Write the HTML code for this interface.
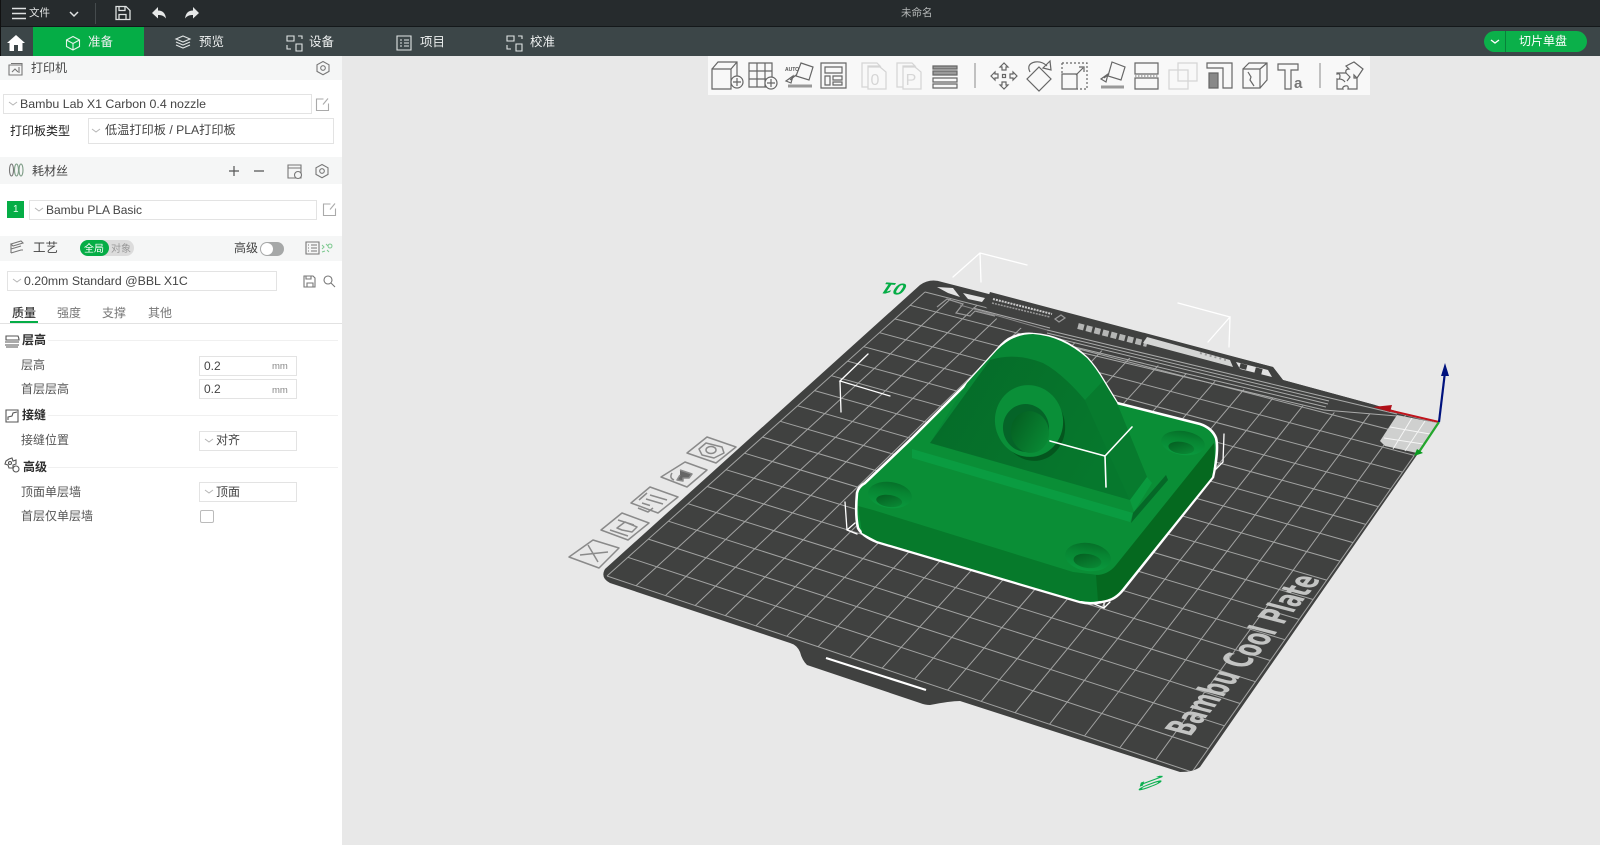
<!DOCTYPE html>
<html lang="zh"><head><meta charset="utf-8"><title>未命名</title>
<style>
html,body{margin:0;padding:0;width:1600px;height:845px;overflow:hidden;background:#e8e8e8}
body{position:relative;font-family:"Liberation Sans","Noto Sans CJK SC",sans-serif;color:#444}
.b{position:absolute}
.t{position:absolute;white-space:nowrap;line-height:1;font-size:12px}
.box{position:absolute;background:#fff;border:1px solid #e3e3e3;box-sizing:border-box}
svg.o{position:absolute;left:0;top:0}
.n{color:#eef0f0;font-size:12.5px}
.h{color:#444;font-size:12px}
.s{color:#2e2e2e;font-weight:bold;font-size:12px}
.l{color:#555;font-size:12px}
.tab{color:#777;font-size:12px}
</style></head><body>
<div class="b" style="left:0;top:0;width:1600px;height:27px;background:#262b2d;border-bottom:1px solid #14181a;box-sizing:border-box"></div>
<div class="b" style="left:0;top:27px;width:1600px;height:29px;background:#3c4648"></div>
<div class="b" style="left:0;top:0;width:1px;height:56px;background:#111"></div>
<div class="b" style="left:33px;top:27px;width:111px;height:29px;background:#05ad46"></div>
<div class="b" style="left:1484px;top:31px;width:103px;height:21px;border-radius:11px;background:#0bb04a"></div>
<div class="b" style="left:1505px;top:31px;width:1px;height:21px;background:#08823a"></div>

<div class="b" style="left:0;top:56px;width:342px;height:789px;background:#fff"></div>
<div class="b" style="left:0;top:56px;width:342px;height:24px;background:#f5f6f6"></div>
<div class="b" style="left:0;top:157px;width:342px;height:27px;background:#f5f6f6"></div>
<div class="b" style="left:0;top:236px;width:342px;height:25px;background:#f5f6f6"></div>

<div class="box" style="left:3px;top:94px;width:309px;height:20px"></div>
<div class="box" style="left:88px;top:118px;width:246px;height:26px"></div>
<div class="b" style="left:7px;top:201px;width:17px;height:17px;background:#05ad46"></div>
<div class="box" style="left:29px;top:200px;width:288px;height:20px"></div>
<div class="b" style="left:80px;top:240px;width:54px;height:16px;border-radius:8px;background:#dcdcdc"></div>
<div class="b" style="left:80px;top:240px;width:29px;height:16px;border-radius:8px;background:#05ad46"></div>
<div class="b" style="left:260px;top:242px;width:24px;height:14px;border-radius:7px;background:#a6a8a8"></div>
<div class="b" style="left:261px;top:243px;width:12px;height:12px;border-radius:6px;background:#fff"></div>
<div class="box" style="left:7px;top:271px;width:270px;height:20px"></div>
<div class="b" style="left:10px;top:321px;width:28px;height:2px;background:#05ad46"></div>
<div class="b" style="left:0;top:323px;width:342px;height:1px;background:#e2e2e2"></div>
<div class="b" style="left:48px;top:340px;width:290px;height:1px;background:#f0f0f0"></div>
<div class="b" style="left:48px;top:415px;width:290px;height:1px;background:#f0f0f0"></div>
<div class="b" style="left:48px;top:467px;width:290px;height:1px;background:#f0f0f0"></div>
<div class="box" style="left:199px;top:356px;width:98px;height:20px"></div>
<div class="box" style="left:199px;top:379px;width:98px;height:20px"></div>
<div class="box" style="left:199px;top:431px;width:98px;height:20px"></div>
<div class="box" style="left:199px;top:482px;width:98px;height:20px"></div>
<div class="b" style="left:200px;top:510px;width:14px;height:13px;border:1px solid #bbb;border-radius:2px;box-sizing:border-box;background:#fff"></div>

<div class="b" style="left:708px;top:56px;width:662px;height:39px;background:#f8f8f8"></div>

<svg class="o" width="1600" height="845" viewBox="0 0 1600 845" xmlns="http://www.w3.org/2000/svg" fill="none">
<defs>
<clipPath id="plate"><path d="M920,285 Q930,278 942,282 L1273,367 L1283,380 L1375,405 L1437,423 L1417,455 L1200,767 Q1194,772 1180,772 L960,701 Q950,701 930,705 Q925,705 920,703 L807,665 Q802,660 800,652 Q797,645 790,643 L610,583 Q600,578 605,569 Z"/></clipPath>
<linearGradient id="hg" x1="0" y1="0" x2="0" y2="1"><stop offset="0" stop-color="#067029"/><stop offset=".35" stop-color="#078532"/><stop offset="1" stop-color="#0a9a3e"/></linearGradient>
<linearGradient id="hi" x1="0" y1="0" x2="1" y2="1"><stop offset="0" stop-color="#045a1f"/><stop offset="1" stop-color="#0a8f37"/></linearGradient>
<linearGradient id="fc" x1="0" y1="0" x2="1" y2=".4"><stop offset="0" stop-color="#056a28"/><stop offset="1" stop-color="#06782d"/></linearGradient>
</defs>

<!-- plate -->
<path d="M920,285 Q930,278 942,282 L1273,367 L1283,380 L1375,405 L1437,423 L1417,455 L1200,767 Q1194,772 1180,772 L960,701 Q950,701 930,705 Q925,705 920,703 L807,665 Q802,660 800,652 Q797,645 790,643 L610,583 Q600,578 605,569 Z" fill="#404140"/>
<g clip-path="url(#plate)"><g id="grid" stroke="#a2a3a2" stroke-width="1"></g></g>
<!-- top band -->
<polygon points="990,292 1273,367 1283,380 1375,405 1390,415 1325,412 1160,366 1107,352 1000,322 985,306" fill="#404140"/>
<g stroke="#a9aaa9" stroke-width="1">
<line x1="1047" y1="330" x2="1330" y2="398"/><line x1="1047" y1="333" x2="1329" y2="401"/><line x1="1047" y1="336" x2="1328" y2="404"/><line x1="1062" y1="344" x2="1326" y2="407"/><line x1="1075" y1="351" x2="1324" y2="410"/>
<line x1="1330" y1="398" x2="1397" y2="414"/><line x1="1324" y1="410" x2="1397" y2="416"/>
</g>
<line x1="1078" y1="326" x2="1147" y2="344" stroke="#b5b6b5" stroke-width="6" stroke-dasharray="6 2.5"/>
<polygon points="1147,337 1230,360 1233,367 1143,343" fill="#d4d5d4"/>
<polygon points="1236,362 1268,370 1272,377 1240,369" fill="#e2e2e2"/>
<rect x="1240" y="364" width="7" height="5" fill="#404140" transform="rotate(15 1243 366)"/>
<rect x="1255" y="368" width="7" height="6" fill="#404140" transform="rotate(15 1258 371)"/>
<line x1="1200" y1="353" x2="1226" y2="360" stroke="#999" stroke-width="2" stroke-dasharray="2 3"/>
<polygon points="937,287 953,288 960,297 948,293" fill="#e4e4e4"/>
<polygon points="963,293 985,298 982,302 968,299" fill="#e4e4e4"/>
<line x1="993" y1="299" x2="1052" y2="314" stroke="#ccc" stroke-width="2" stroke-dasharray="2 1"/>
<line x1="992" y1="303" x2="1050" y2="317" stroke="#999" stroke-width="1.5" stroke-dasharray="2 1"/>
<path d="M1055,319l6,-4l4,3l-6,4zM937,307l10,-8l16,5l-7,9l14,3l5,-5l20,5" stroke="#999" stroke-width="1.2"/>
<line x1="973" y1="308" x2="1050" y2="328" stroke="#aaa"/>
<line x1="960" y1="305" x2="1047" y2="330" stroke="#888"/>
<!-- gray corner -->
<polygon points="1397,415 1437,423 1417,453 1385,446 1380,441" fill="#cfd0cf"/>
<path d="M1412,418L1393,449M1425,421L1405,451M1390,427L1430,434M1384,438L1423,444" stroke="#fff" stroke-opacity=".8"/>
<!-- plate text -->
<text transform="matrix(.64,-.77,1.23,.32,1190,737)" font-family="'DejaVu Sans','Liberation Sans',sans-serif" font-weight="bold" font-size="30" fill="#c3c4c3" textLength="205" lengthAdjust="spacingAndGlyphs">Bambu Cool Plate</text>
<line x1="826" y1="658" x2="926" y2="690" stroke="#fff" stroke-width="2.2"/>
<text transform="matrix(-1.3,-.1,.4,-1,908,284)" font-family="'Liberation Sans',sans-serif" font-size="16" font-weight="bold" font-style="italic" fill="#05ad46">01</text>
<text transform="matrix(-.2,.75,-2.7,1,1141,782)" font-family="'Liberation Sans',sans-serif" font-size="12" font-weight="bold" fill="#0cb050">10</text>

<!-- left plate labels -->
<g stroke="#8a8a8a" stroke-width="1.5" stroke-linejoin="round">
<polygon points="707,437 736,447 716,463 687,453"/><polygon points="685,462 707,470 687,487 661,477"/><polygon points="650,487 678,497 658,513 631,503"/><polygon points="622,513 649,523 628,540 601,530"/><polygon points="593,540 619,548 599,568 569,557"/>
<polygon points="706,443 722,447 724,453 714,458 702,455 699,449"/><ellipse cx="711" cy="450" rx="5" ry="3.5"/>
<path d="M680,470l12,4l-3,4h-6v3l-6,-1l3,-5" fill="#666"/><path d="M672,473q-3,5 2,7"/>
<path d="M650,495l17,5M646,499l17,5M642,503l8,2.5M639,500l8,-7M653,508l-5,4l-10,-4"/>
<path d="M618,520l16,5M617,528l8,-6l12,5l-5,5l-10,-2zM610,530l18,6"/>
<path d="M588,545L598,562M580,555L608,552"/>
</g>

<!-- bounding box lines -->
<g stroke="#fff" stroke-width="1.3" stroke-linecap="round">
<path d="M868,354L840,381L890,396M840,381L841,412"/>
<path d="M980,253L953,277M980,253L1027,265M980,253L981,282"/>
<path d="M1178,303L1230,317L1208,342M1230,317L1229,347"/>
<path d="M1224,434L1223,462L1215,470"/>
<path d="M845,502L847,530L857,534M847,530L855,523"/>
<path d="M1104,580L1104,608L1092,603M1104,608L1110,602"/>
</g>

<!-- model -->
<path d="M857,493 Q858,487 865,483 L910,440 L967,383 L997,350 Q1005,340 1013,337 Q1023,333 1033,334 Q1048,335 1060,340 Q1076,347 1087,358 Q1096,368 1103,380 L1117,403 L1200,424 Q1212,428 1216,438 Q1219,450 1213,477 L1123,590 Q1115,600 1105,601 Q1092,605 1080,602 L877,542 Q862,536 858,528 Q855,515 857,493 Z" fill="#0a8e36" stroke="#fff" stroke-width="2.6"/>
<polygon points="858,506 873,510 1073,572 1098,575 1100,601 1080,601 877,541 862,533" fill="#067a2b"/>
<path d="M1214,443 L1116,565 Q1108,575 1096,575 L1098,601 Q1112,601 1122,589 L1212,477 Q1216,460 1214,443 Z" fill="#05691f"/>
<!-- upright -->
<path d="M930,443 L967,383 L997,350 Q1013,334 1033,334 Q1062,336 1087,358 Q1096,368 1103,380 L1117,403 L1147,477 L1130,500 Z" fill="#088835"/>
<polygon points="1085,400 1103,381 1117,403 1147,477 1130,500" fill="#077b2e"/>
<path d="M930,443 L990,360 Q1015,352 1043,363 Q1062,373 1085,400 L1130,500 Z" fill="url(#fc)"/>
<polygon points="1130,500 1147,477 1152,483 1134,512" fill="#0a9a3e"/>
<polygon points="912,449 912,458 1130,522 1133,513" fill="#0a9c41"/>
<polygon points="1133,513 1166,475 1168,480 1131,523" fill="#056827"/>
<!-- boss -->
<ellipse cx="1033" cy="426" rx="32" ry="35" fill="#04561e" transform="rotate(-12 1033 426)"/>
<ellipse cx="1029" cy="421" rx="34" ry="36" fill="#0a8f38" transform="rotate(-12 1029 421)"/>
<ellipse cx="1026" cy="428" rx="23" ry="24" fill="#056428" transform="rotate(-12 1026 428)"/>
<ellipse cx="1030" cy="432" rx="19" ry="21" fill="url(#hi)" transform="rotate(-12 1030 432)"/>
<!-- holes -->
<g transform="rotate(8 890 495)"><ellipse cx="890" cy="495" rx="22" ry="13" fill="url(#hg)"/><ellipse cx="890" cy="501" rx="13" ry="6" fill="url(#hi)"/></g>
<g transform="rotate(8 1088 557)"><ellipse cx="1088" cy="557" rx="23" ry="14" fill="url(#hg)"/><ellipse cx="1088" cy="561" rx="14" ry="7" fill="url(#hi)"/></g>
<g transform="rotate(8 1183 443)"><ellipse cx="1183" cy="443" rx="22" ry="12" fill="url(#hg)"/><ellipse cx="1182" cy="448" rx="13" ry="6" fill="url(#hi)"/></g>
<path d="M1050,441L1105,456L1132,427M1105,456L1106,487" stroke="#fff" stroke-width="1.6" stroke-linecap="round"/>

<!-- axes -->
<line x1="1439" y1="422" x2="1388" y2="410" stroke="#c0141c" stroke-width="2"/><polygon points="1373,407 1392,405 1390,412" fill="#b01018"/>
<line x1="1439" y1="422" x2="1419" y2="452" stroke="#23a72c" stroke-width="2.2"/><polygon points="1414,456 1417,449 1423,453" fill="#0a9a20"/>
<line x1="1439" y1="422" x2="1445" y2="372" stroke="#00127e" stroke-width="2.2"/><polygon points="1445,363 1441,376 1449,376" fill="#00127e"/>

<!-- toolbar icons -->
<line x1="975" y1="63" x2="975" y2="88" stroke="#8a8a8a"/><line x1="1320" y1="63" x2="1320" y2="88" stroke="#8a8a8a"/>
<g stroke="#666" stroke-width="1.2">
<path d="M712,69h19v20h-19zM712,69l6,-7h19v14M731,69l6,-7"/><circle cx="737" cy="82" r="6" fill="#f8f8f8"/><path d="M733,82h8M737,78v8"/>
<path d="M749,63h23v24h-23zM749,71h23M749,79h23M757,63v24M765,63v24"/><circle cx="771" cy="83" r="6" fill="#f8f8f8"/><path d="M767,83h8M771,79v8"/>
<path d="M801,63l12,4l-4,13l-13,-4z" /><path d="M788,86h24" stroke-width="3" stroke="#999"/><path d="M793,76l-7,5l5,2zM790,80l6,-5" />
<path d="M821,63h25v25h-25zM825,67h17v6h-17zM825,76h5v9h-5zM833,76h9v4h-9zM833,82h9v3h-9z"/>
<path d="M933,66h24v3h-24zM933,71h24v4h-24z" fill="#9a9a9a"/><path d="M933,78h24v4h-24zM933,84h24v4h-24z"/>
<path d="M1004,63l-4,4h2v3h4v-3h2zM1004,89l-4,-4h2v-3h4v3h2zM991,76l4,-4v2h3v4h-3v2zM1017,76l-4,-4v2h-3v4h3v2z"/><rect x="1002.500" y="74.500" width="3" height="3"/>
<path d="M1039,67l12,12l-12,12l-12,-12zM1030,72q-4,-8 5,-10q7,-1 12,4M1050,61l1,9l-8,-2z"/>
<path d="M1062,74h15v15h-15z" /><path d="M1062,63h25v26h-10M1062,63v10" stroke-dasharray="2 2"/><path d="M1076,75l7,-7M1079,67h5v5"/>
<path d="M1112,62l13,5l-4,13l-13,-4z"/><path d="M1101,87h23" stroke-width="3" stroke="#999"/><path d="M1108,74l-7,5l5,3zM1104,78l5,-4"/>
<path d="M1135,63h23v11h-23zM1135,78h23v11h-23z"/><path d="M1135,76h23" stroke-dasharray="1.500 1.500" stroke="#888"/>
<path d="M1207,63h25v25h-9v-20h-16z"/><path d="M1209,73h9v15h-9z" fill="#888"/>
<path d="M1243,69h17v19h-17zM1243,69l6,-6h18v17l-7,8M1260,69l7,-6M1248,72l3,5l-1,3l4,6" />
<path d="M1278,64h20v6h-7v19h-6v-19h-7z"/>
<path d="M1337,73h9q-1,-4 3,-4l-3,-3l8,-4l9,7l-6,9l-3,-3v3h3v11h-9q1,-4 -3,-3q-3,1 -2,3h-6v-10q3,1 3,-3q0,-3 -3,-2z"/><path d="M1346,73l4,4l-3,4M1339,79q4,0 6,3"/>
</g>
<text x="1294" y="88" font-family="'Liberation Sans',sans-serif" font-size="15" font-weight="bold" fill="#777">a</text>
<text x="785" y="71" font-family="'Liberation Sans',sans-serif" font-size="5" font-weight="bold" fill="#555">AUTO</text>
<g stroke="#d4d4d4" stroke-width="1.2">
<path d="M862,63h15l3,3h-12v21h-6zM868,67h12l6,5v17h-18z"/>
<path d="M897,63h15l3,3h-12v21h-6zM903,67h12l6,5v17h-18z"/>
<path d="M1178,63h19v18h-19zM1169,70h19v19h-19z"/>
</g>
<text x="875" y="85" text-anchor="middle" font-family="'Liberation Sans',sans-serif" font-size="16" fill="#d6d6d6">0</text>
<text x="911" y="85" text-anchor="middle" font-family="'Liberation Sans',sans-serif" font-size="16" fill="#d6d6d6">P</text>

<!-- title icons -->
<g stroke="#dfe2e2" stroke-width="1.5">
<path d="M12,8.500h14M12,13.500h14M12,18.500h14"/>
<path d="M70,12l4,4l4,-4"/>
<path d="M116,6.500h10l4,4v9h-14zM119,6.500v4h6v-4M119,19.500v-5h7v5" stroke-width="1.3"/>
</g>
<line x1="95.500" y1="3" x2="95.500" y2="24" stroke="#454b4d"/>
<path d="M152,13l6,-6v3.500q7,0 8,8q-3,-4 -8,-3.500v3.500z" fill="#e6e8e8"/>
<path d="M199,13l-6,-6v3.500q-7,0 -8,8q3,-4 8,-3.500v3.500z" fill="#e6e8e8"/>

<!-- nav icons -->
<path d="M16,35l-9,8h2.500v8h4.500v-6h4v6h4.500v-8h2.500z" fill="#fff"/>
<g stroke="#e6f5ea" stroke-width="1.1">
<path d="M73,36.500l6.500,3.500v6.500l-6.500,3.500l-6.500,-3.500v-6.500zM66.500,40l6.500,3.500l6.500,-3.500M73,43.500v6.500"/>
</g>
<g stroke="#e2e6e6" stroke-width="1.1">
<path d="M183,36l7,3l-7,3l-7,-3zM176,42l7,3l7,-3M176,45l7,3l7,-3"/>
<path d="M287,36h7v5h-7zM298,36h4v3M287,45v4h4M296,44h6v7h-6z"/>
<path d="M397,36h14v14h-14zM400,40h2M404,40h5M400,43h2M404,43h5M400,46h2M404,46h5"/>
<path d="M507,36h7v5h-7zM518,36h4v3M507,45v4h4M516,44h6v7h-6z"/>
</g>
<path d="M1491,40l4,3l4,-3" stroke="#fff" stroke-width="1.400"/>

<!-- panel icons -->
<g stroke="#777" stroke-width="1.1">
<path d="M9,65h13v10h-13zM11,63.500h11v1.500M19,67v6M12,72l3,-3l3,3"/>
<path d="M323,61.500l6,3.300v6.600l-6,3.300l-6,-3.300v-6.600z"/><circle cx="323" cy="68" r="2.300"/>
<path d="M322,172.500" />
<path d="M323.500,99h-7v11.500h12v-7M323,104.500l5,-6" stroke="#aaa"/>
<ellipse cx="11.500" cy="170" rx="2" ry="6"/><ellipse cx="16.500" cy="170" rx="2" ry="6" stroke="#7d9c86"/><ellipse cx="21" cy="170" rx="2" ry="6" stroke="#7d9c86"/>
<path d="M229,171h10M234,166v10M254,171h10" stroke="#555" stroke-width="1.2"/>
<path d="M288,165h13v13h-13zM288,168h13" /><circle cx="298" cy="175" r="3.500" fill="#f5f6f6"/>
<path d="M322,164.500l6,3.300v6.600l-6,3.300l-6,-3.300v-6.600z"/><circle cx="322" cy="171" r="2.300"/>
<path d="M330.500,204h-7v11.500h12v-7M330,209.500l5,-6" stroke="#aaa"/>
<path d="M11,244l10,-3l2,2l-10,3zM11,249l10,-3M11,253l10,-3h2M11,244v9" />
<path d="M306,242h13v12h-13zM308,245h1M311,245h6M308,248h1M311,248h6M308,251h1M311,251h6"/>
<path d="M304,276h9l2,2v9h-11zM306,276v3h5v-3M307,287v-4h6v4"/>
<circle cx="328" cy="280" r="4"/><path d="M331,283l4,4"/>
<path d="M6,336h12q1,2 1,4h-13q0,-2 0,-4zM5,342h14M5,345h14M6,347h12" stroke="#555"/>
<path d="M6,410h12v12h-12zM8,420v-3l4,-1l1,-3l4,-1" stroke="#555"/>
<path d="M9,459l3,-1l1,3l3,-1v4l-3,1v3l-4,0l-1,-3l-3,-1l1,-3z" stroke="#555"/><circle cx="10" cy="463" r="1.500" stroke="#555"/><circle cx="16" cy="469" r="3" stroke="#555"/>
</g>
<path d="M322,245l2,2l-2,2M326,244l2,2M322,252l3,-1M329,252l-2,-2M330,244a2,2 0 1 0 .01,0" stroke="#7cc98f"/>
<g stroke="#b5b5b5" stroke-width="1">
<path d="M9,102l4,3l4,-3M92,129l4,3l4,-3M35,208l4,3l4,-3M13,279l4,3l4,-3M205,439l4,3l4,-3M205,490l4,3l4,-3"/>
</g>
</svg>

<div class="t" style="left:29px;top:8px;font-size:10.500px;color:#e2e4e4">文件</div>
<div class="t" style="left:901px;top:8px;font-size:10.500px;color:#b5b8b8">未命名</div>
<div class="t n" style="left:88px;top:36px;">准备</div>
<div class="t n" style="left:199px;top:36px;">预览</div>
<div class="t n" style="left:309px;top:36px;">设备</div>
<div class="t n" style="left:420px;top:36px;">项目</div>
<div class="t n" style="left:530px;top:36px;">校准</div>
<div class="t" style="left:1519px;top:35px;color:#fff;font-size:12px">切片单盘</div>

<div class="t h" style="left:31px;top:62px">打印机</div>
<div class="t" style="left:20px;top:98px;color:#444;font-size:12.400px">Bambu Lab X1 Carbon 0.4 nozzle</div>
<div class="t s" style="left:10px;top:125px;font-weight:normal;color:#222">打印板类型</div>
<div class="t" style="left:105px;top:124px;color:#444;font-size:12.200px">低温打印板 / PLA打印板</div>
<div class="t h" style="left:32px;top:165px">耗材丝</div>
<div class="t" style="left:13px;top:205px;color:#e8fff0;font-size:10px">1</div>
<div class="t" style="left:46px;top:204px;color:#444;font-size:12px">Bambu PLA Basic</div>
<div class="t h" style="left:33px;top:242px;font-size:12.500px">工艺</div>
<div class="t" style="left:84px;top:244.500px;color:#fff;font-size:10px">全局</div>
<div class="t" style="left:111px;top:244.500px;color:#999;font-size:10px">对象</div>
<div class="t h" style="left:234px;top:242px">高级</div>
<div class="t" style="left:24px;top:275px;color:#444;font-size:12.300px">0.20mm Standard @BBL X1C</div>
<div class="t" style="left:12px;top:307px;color:#333;font-size:12px;font-weight:500">质量</div>
<div class="t tab" style="left:57px;top:307px">强度</div>
<div class="t tab" style="left:102px;top:307px">支撑</div>
<div class="t tab" style="left:148px;top:307px">其他</div>
<div class="t s" style="left:22px;top:334px">层高</div>
<div class="t l" style="left:21px;top:359px">层高</div>
<div class="t l" style="left:21px;top:383px">首层层高</div>
<div class="t" style="left:204px;top:360px;color:#444;font-size:12px">0.2</div>
<div class="t" style="left:272px;top:362px;color:#888;font-size:9.500px">mm</div>
<div class="t" style="left:204px;top:383px;color:#444;font-size:12px">0.2</div>
<div class="t" style="left:272px;top:386px;color:#888;font-size:9.500px">mm</div>
<div class="t s" style="left:22px;top:409px">接缝</div>
<div class="t l" style="left:21px;top:434px">接缝位置</div>
<div class="t" style="left:216px;top:434px;color:#444;font-size:12px">对齐</div>
<div class="t s" style="left:23px;top:461px">高级</div>
<div class="t l" style="left:21px;top:486px">顶面单层墙</div>
<div class="t" style="left:216px;top:486px;color:#444;font-size:12px">顶面</div>
<div class="t l" style="left:21px;top:510px">首层仅单层墙</div>

<script>
(function(){
var P=[[607,576],[1192,772],[1437,423],[925,292]];
var x0=P[0][0],y0=P[0][1],x1=P[1][0],y1=P[1][1],x2=P[2][0],y2=P[2][1],x3=P[3][0],y3=P[3][1];
var dx1=x1-x2,dx2=x3-x2,sx=x0-x1+x2-x3,dy1=y1-y2,dy2=y3-y2,sy=y0-y1+y2-y3,D=dx1*dy2-dx2*dy1;
var g=(sx*dy2-dx2*sy)/D,h=(dx1*sy-sx*dy1)/D,a=x1-x0+g*x1,b=x3-x0+h*x3,c=x0,d=y1-y0+g*y1,e=y3-y0+h*y3,f=y0;
function m(u,v){var w=g*u+h*v+1;return ((a*u+b*v+c)/w).toFixed(1)+","+((d*u+e*v+f)/w).toFixed(1);}
var N=18,s="";
for(var i=0;i<=N;i++){var t=i/N;
var A=m(t,0).split(","),B=m(t,1).split(",");
s+='<line x1="'+A[0]+'" y1="'+A[1]+'" x2="'+B[0]+'" y2="'+B[1]+'"/>';
A=m(0,t).split(",");B=m(1,t).split(",");
s+='<line x1="'+A[0]+'" y1="'+A[1]+'" x2="'+B[0]+'" y2="'+B[1]+'"/>';}
document.getElementById("grid").innerHTML=s;
})();
</script>
</body></html>
